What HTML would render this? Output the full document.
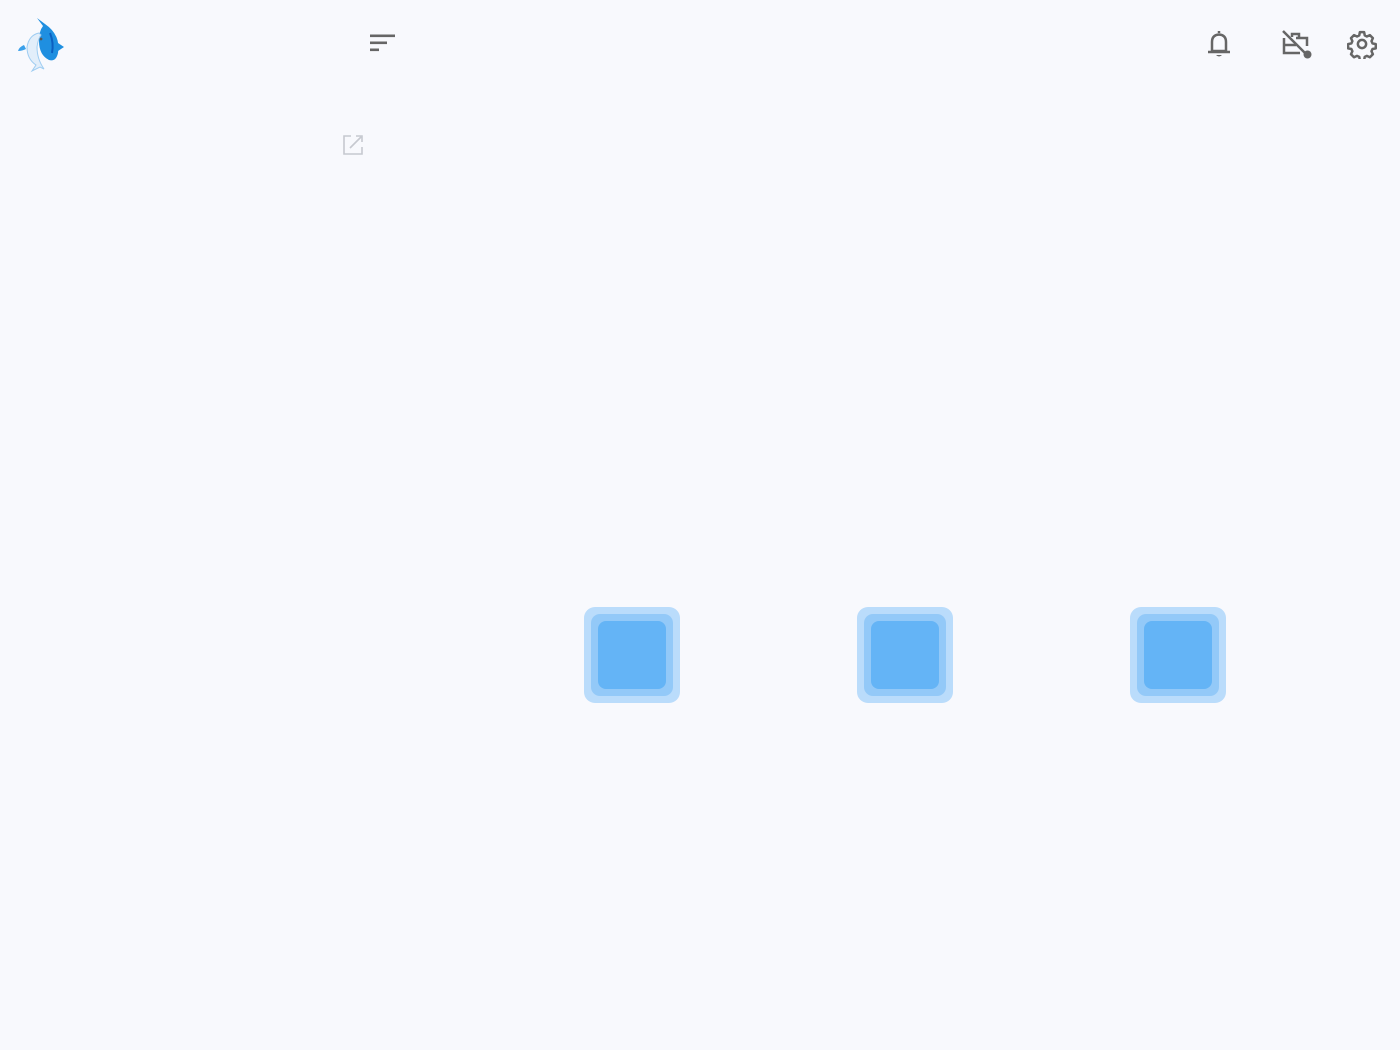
<!DOCTYPE html>
<html><head><meta charset="utf-8"><style>
html,body{margin:0;padding:0;width:1400px;height:1050px;background:#f8f9fd;overflow:hidden;font-family:"Liberation Sans",sans-serif}
.sq{position:absolute;top:607px;width:96px;height:96px;border-radius:11px;background:#badcfb}
.sq .m{position:absolute;left:7px;top:7px;right:7px;bottom:7px;border-radius:9px;background:#93c9f8}
.sq .i{position:absolute;left:7px;top:7px;right:7px;bottom:7px;border-radius:8px;background:#64b4f6}
svg{position:absolute}
</style></head><body>
<!-- logo -->
<svg style="left:10px;top:15px" width="58" height="58" viewBox="0 0 58 58">
  <path d="M27 3 L35 9 Q51 20 48 38 Q46 47 39 45 Q29 40 29 26 Q29 16 33 11 Z" fill="#1f8fe0"/>
  <path d="M40 18 Q44 28 42 38" stroke="#0b5fc0" stroke-width="2" fill="none"/>
  <path d="M48 28 L54 32 L48 36 Z" fill="#1f8fe0"/>
  <path d="M29 18 Q19 20 17 32 Q17 44 26 50 L22 56 L30 52 L34 54 Q27 44 27 32 Q28 24 31 20 Z" fill="#e2eefa" stroke="#9fcdf2" stroke-width="1"/>
  <path d="M14 30 Q9 32 8 36 Q12 36 16 34 Z" fill="#3aa0ea"/>
  <circle cx="31" cy="24" r="1.4" fill="#555"/>
</svg>
<!-- menu -->
<svg style="left:368px;top:33px" width="30" height="22" viewBox="0 0 30 22">
  <rect x="2" y="1.5" width="25" height="2.6" fill="#666"/>
  <rect x="2" y="8.5" width="17" height="2.6" fill="#666"/>
  <rect x="2" y="15.5" width="9" height="2.6" fill="#666"/>
</svg>
<!-- edit -->
<svg style="left:342px;top:134px" width="22" height="22" viewBox="0 0 22 22">
  <path d="M9 2 H2 V20 H20 V13" stroke="#c6c9d0" stroke-width="1.6" fill="none"/>
  <path d="M8 14 L19 3 M14 2 H20 V8" stroke="#c6c9d0" stroke-width="1.6" fill="none"/>
</svg>
<!-- bell -->
<svg style="left:1205px;top:29px" width="28" height="30" viewBox="0 0 28 30">
  <path d="M14 2 V4 M7 22 V13 Q7 6 14 5.5 Q21 6 21 13 V22 Z M3 23 H25" stroke="#666" stroke-width="2.5" fill="none" stroke-linejoin="round"/>
  <path d="M11 26 Q14 29 17 26 Z" fill="#666"/>
</svg>
<!-- case off -->
<svg style="left:1280px;top:28px" width="34" height="34" viewBox="0 0 34 34">
  <path d="M3 3 L25 25" stroke="#666" stroke-width="2.5"/>
  <path d="M12 9 V6 H19 V9 M16 10 H27 V18 M4 10 V25 H20 M4 17 H16" stroke="#666" stroke-width="2.5" fill="none"/>
  <circle cx="27.5" cy="26.5" r="4" fill="#666"/>
</svg>
<!-- gear -->
<svg style="left:1347px;top:29px" width="30" height="30" viewBox="0 0 24 24">
  <path fill="none" stroke="#666" stroke-width="2" stroke-linejoin="round" d="M10.3 2.5h3.4l.5 2.6 1.7.9 2.4-1.1 2.4 2.4-1.1 2.4.8 1.8 2.6.6v3.4l-2.6.5-.8 1.8 1.1 2.4-2.4 2.4-2.4-1.1-1.7.8-.5 2.7h-3.4l-.5-2.7-1.8-.8-2.4 1.1-2.4-2.4 1.1-2.4-.8-1.8-2.6-.5v-3.4l2.6-.6.8-1.8-1.1-2.4 2.4-2.4 2.4 1.1 1.8-.9z"/>
  <circle cx="12" cy="12" r="3.3" fill="none" stroke="#666" stroke-width="2"/>
</svg>
<div class="sq" style="left:584px"><div class="m"><div class="i"></div></div></div>
<div class="sq" style="left:857px"><div class="m"><div class="i"></div></div></div>
<div class="sq" style="left:1130px"><div class="m"><div class="i"></div></div></div>
</body></html>
